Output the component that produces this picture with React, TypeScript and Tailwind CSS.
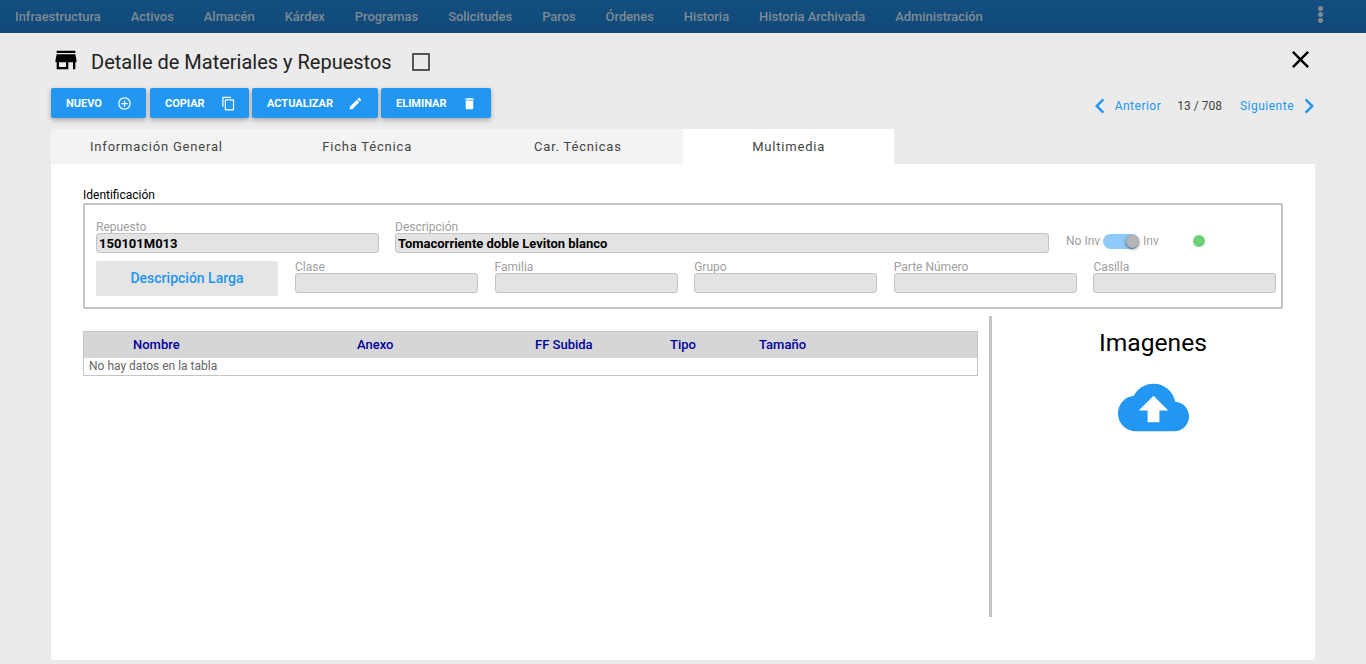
const font = { fontFamily: 'Roboto, sans-serif' }

const navItems = ['Infraestructura', 'Activos', 'Almacén', 'Kárdex', 'Programas', 'Solicitudes', 'Paros', 'Órdenes', 'Historia', 'Historia Archivada', 'Administración']

const Icon = ({ d, className }: { d: string; className: string }) => (
    <svg viewBox="0 0 24 24" fill="currentColor" className={className}>
        <path d={d} />
    </svg>
)

const icons = {
    store: 'M20 4H4v2h16V4zm1 10v-2l-1-5H4l-1 5v2h1v6h10v-6h4v6h2v-6h1zm-9 4H6v-4h6v4z',
    add: 'M13 7h-2v4H7v2h4v4h2v-4h4v-2h-4V7zm-1-5C6.48 2 2 6.48 2 12s4.48 10 10 10 10-4.48 10-10S17.52 2 12 2zm0 18c-4.41 0-8-3.59-8-8s3.59-8 8-8 8 3.59 8 8-3.59 8-8 8z',
    copy: 'M16 1H4c-1.1 0-2 .9-2 2v14h2V3h12V1zm3 4H8c-1.1 0-2 .9-2 2v14c0 1.1.9 2 2 2h11c1.1 0 2-.9 2-2V7c0-1.1-.9-2-2-2zm0 16H8V7h11v14z',
    edit: 'M3 17.25V21h3.75L17.81 9.94l-3.75-3.75L3 17.25zM20.71 7.04c.39-.39.39-1.02 0-1.41l-2.34-2.34c-.39-.39-1.02-.39-1.41 0l-1.83 1.83 3.75 3.75 1.83-1.83z',
    trash: 'M6 19c0 1.1.9 2 2 2h8c1.1 0 2-.9 2-2V7H6v12zM19 4h-3.5l-1-1h-5l-1 1H5v2h14V4z',
    cloud: 'M19.35 10.04C18.67 6.59 15.64 4 12 4 9.11 4 6.6 5.64 5.35 8.04 2.34 8.36 0 10.91 0 14c0 3.31 2.69 6 6 6h13c2.76 0 5-2.24 5-5 0-2.64-2.05-4.78-4.65-4.96zM14 13v4h-4v-4H7l5-5 5 5h-3z',
    close: 'M19 6.41L17.59 5 12 10.59 6.41 5 5 6.41 10.59 12 5 17.59 6.41 19 12 13.41 17.59 19 19 17.59 13.41 12z',
    left: 'M15.41 7.41L14 6l-6 6 6 6 1.41-1.41L10.83 12z',
    right: 'M10 6L8.59 7.41 13.17 12l-4.58 4.59L10 18l6-6z',
}

const ActionButton = ({ label, icon, width, gap }: { label: string; icon: string; width: string; gap: string }) => (
    <button className={`flex items-center pl-[15px] pt-[1px] h-[30px] rounded-[2px] bg-[#2196f3] text-white text-[11px] font-bold shadow-[0_2px_5px_rgba(0,0,0,0.3)] ${width} ${gap}`}>
        <span className="pt-[2px]">{label}</span>
        <Icon d={icon} className="w-[15px] h-[15px]" />
    </button>
)

const Field = ({ label, value, className }: { label: string; value?: string; className: string }) => (
    <div className={`flex flex-col shrink-0 ${className}`}>
        <span className="text-[12px] leading-[12px] text-[#9e9e9e]">{label}</span>
        <div className="h-[20px] rounded-[3px] border border-[#c4c4c4] bg-[#e3e3e3] px-[2px] text-[13px] leading-[20px] font-bold text-black">
            {value}
        </div>
    </div>
)

const Tab = ({ label, active }: { label: string; active?: boolean }) => (
    <div className={`w-[211px] h-[35px] flex items-center justify-center text-[13px] tracking-[0.8px] text-[#444] ${active ? 'bg-white' : ''}`}>
        {label}
    </div>
)

export default function App() {
    return (
        <div style={font} className="h-[664px] overflow-hidden bg-[#ebebeb]">
            <nav className="h-[33px] flex items-center justify-between pl-[15px] pr-[43px] bg-gradient-to-b from-[#134e80] to-[#114a78] text-[#7e8a94] text-[12.9px] font-medium">
                <div className="flex gap-[30px]">
                    {navItems.map((item) => (
                        <a key={item} href="#">{item}</a>
                    ))}
                </div>
                <div className="flex flex-col gap-[1px] -mt-[5px]">
                    <span className="w-[5px] h-[5px] rounded-full bg-[#7e8a94]" />
                    <span className="w-[5px] h-[5px] rounded-full bg-[#7e8a94]" />
                    <span className="w-[5px] h-[5px] rounded-full bg-[#7e8a94]" />
                </div>
            </nav>

            <main className="pl-[51px] pr-[51px]">
                <div className="h-[55px] flex items-center justify-between pt-[2px]">
                    <div className="flex items-center pl-[1px]">
                        <Icon d={icons.store} className="w-[28px] h-[28px] -mt-[3px] text-black" />
                        <h1 className="ml-[11px] text-[20px] text-[#222]">Detalle de Materiales y Repuestos</h1>
                        <span className="ml-[20px] mt-[1px] w-[18px] h-[18px] border-2 border-[#555] rounded-[1px]" />
                    </div>
                    <Icon d={icons.close} className="w-[29px] h-[29px] -mt-[4px] text-black" />
                </div>

                <div className="h-[30px] flex items-center justify-between">
                    <div className="flex gap-[3px]">
                        <ActionButton label="NUEVO" icon={icons.add} width="w-[95px] mr-[1px]" gap="gap-[15px]" />
                        <ActionButton label="COPIAR" icon={icons.copy} width="w-[99px]" gap="gap-[16px]" />
                        <ActionButton label="ACTUALIZAR" icon={icons.edit} width="w-[126px]" gap="gap-[15px]" />
                        <ActionButton label="ELIMINAR" icon={icons.trash} width="w-[110px]" gap="gap-[15px]" />
                    </div>
                    <div className="flex items-center mt-[6px] -mr-[9px] text-[12px] tracking-[0.5px] text-[#2196f3]">
                        <Icon d={icons.left} className="w-[30px] h-[30px]" />
                        <span>Anterior</span>
                        <span className="ml-[16px] mr-[18px] -mt-[1px] text-[#444] tracking-normal">13 / 708</span>
                        <span>Siguiente</span>
                        <Icon d={icons.right} className="w-[30px] h-[30px]" />
                    </div>
                </div>

                <div className="mt-[11px] h-[35px] flex bg-[#f3f3f3] w-[843px]">
                    <Tab label="Información General" />
                    <Tab label="Ficha Técnica" />
                    <Tab label="Car. Técnicas" />
                    <Tab label="Multimedia" active />
                </div>

                <div className="h-[496px] rounded-b-[3px] bg-white pl-[32px] pr-[32px] pt-[24px]">
                    <div className="text-[12px] leading-[14px] text-black">Identificación</div>
                    <div className="h-[106px] mt-[1px] rounded-[2px] border-2 border-[#c4c4c4] pl-[11px] pr-[5px] pt-[16px]">
                        <div className="flex items-end">
                            <Field label="Repuesto" value="150101M013" className="w-[283px]" />
                            <Field label="Descripción" value="Tomacorriente doble Leviton blanco" className="w-[654px] ml-[16px]" />
                            <div className="flex items-center h-[20px] mb-[2px] ml-[17px] text-[12px] text-[#9e9e9e]">
                                <span>No Inv</span>
                                <span className="relative ml-[3px] w-[36px] h-[15px] rounded-full bg-[#90caf9]">
                                    <span className="absolute right-0 top-[1px] w-[13px] h-[13px] rounded-full bg-[#b5b5b5] shadow-[0_1px_3px_rgba(0,0,0,0.6)]" />
                                </span>
                                <span className="ml-[4px]">Inv</span>
                                <span className="ml-[34px] w-[12px] h-[12px] rounded-full bg-[#6fcf75]" />
                            </div>
                        </div>
                        <div className="flex items-end mt-[8px] h-[35px]">
                            <button className="w-[182px] h-[35px] shrink-0 rounded-[2px] bg-[#e5e5e5] text-[14px] font-medium text-[#2196f3]">Descripción Larga</button>
                            <div className="flex gap-[16.6px] ml-[17px] mb-[3px]">
                                <Field label="Clase" className="w-[183px]" />
                                <Field label="Familia" className="w-[183px]" />
                                <Field label="Grupo" className="w-[183px]" />
                                <Field label="Parte Número" className="w-[183px]" />
                                <Field label="Casilla" className="w-[183px]" />
                            </div>
                        </div>
                    </div>

                    <div className="flex mt-[7px] -mr-[32px]">
                        <div className="w-[895px] shrink-0 pt-[15px]">
                            <div className="border border-[#c4c4c4]">
                                <div className="relative h-[26px] bg-[#d6d6d6] text-[13px] font-medium leading-[26px] text-[#00009c]">
                                    <span className="absolute left-[49px]">Nombre</span>
                                    <span className="absolute left-[273px]">Anexo</span>
                                    <span className="absolute left-[451px]">FF Subida</span>
                                    <span className="absolute left-[586px]">Tipo</span>
                                    <span className="absolute left-[675px]">Tamaño</span>
                                </div>
                                <div className="h-[17px] px-[5px] text-[12px] leading-[17px] text-[#666]">No hay datos en la tabla</div>
                            </div>
                        </div>
                        <div className="ml-[11px] w-[3px] h-[301px] shrink-0 bg-[#c4c4c4]" />
                        <div className="w-[322px] shrink-0 flex flex-col items-center">
                            <h2 className="mt-[11px] text-[24.6px] leading-[32px] text-black">Imagenes</h2>
                            <Icon d={icons.cloud} className="w-[71px] h-[71px] mt-[13px] text-[#2196f3]" />
                        </div>
                    </div>
                </div>
            </main>
        </div>
    )
}
